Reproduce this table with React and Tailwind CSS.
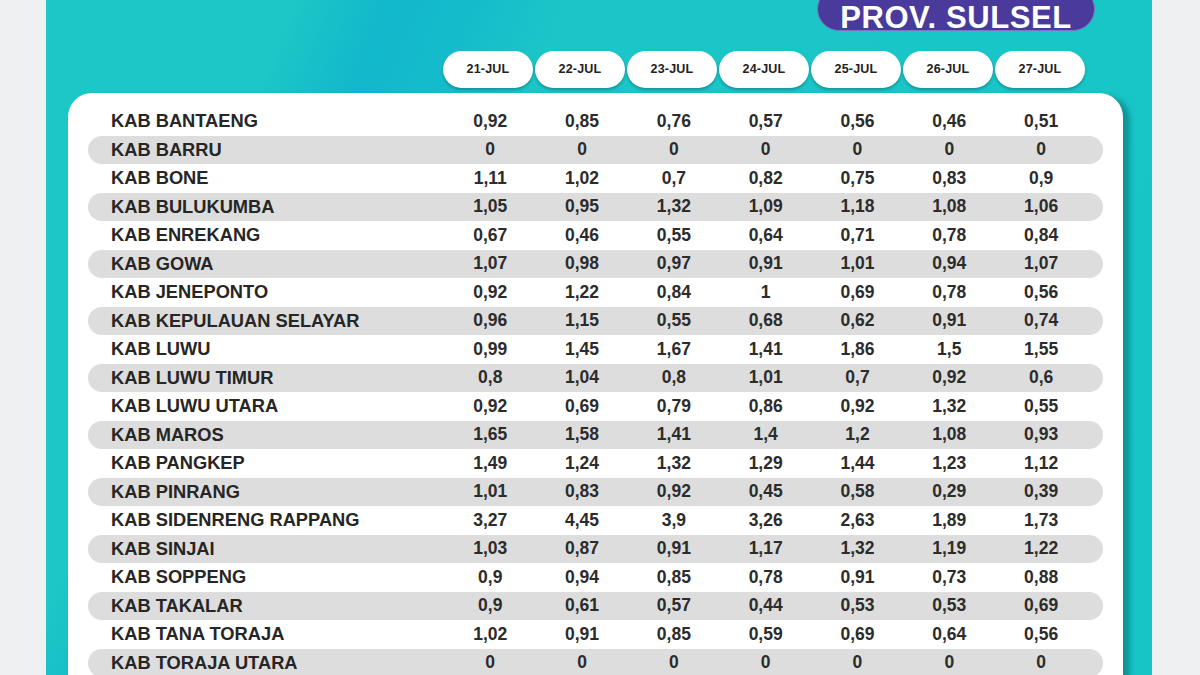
import React from 'react';

const dates = ['21-JUL', '22-JUL', '23-JUL', '24-JUL', '25-JUL', '26-JUL', '27-JUL'];

const rows = [
  ['KAB BANTAENG', '0,92', '0,85', '0,76', '0,57', '0,56', '0,46', '0,51'],
  ['KAB BARRU', '0', '0', '0', '0', '0', '0', '0'],
  ['KAB BONE', '1,11', '1,02', '0,7', '0,82', '0,75', '0,83', '0,9'],
  ['KAB BULUKUMBA', '1,05', '0,95', '1,32', '1,09', '1,18', '1,08', '1,06'],
  ['KAB ENREKANG', '0,67', '0,46', '0,55', '0,64', '0,71', '0,78', '0,84'],
  ['KAB GOWA', '1,07', '0,98', '0,97', '0,91', '1,01', '0,94', '1,07'],
  ['KAB JENEPONTO', '0,92', '1,22', '0,84', '1', '0,69', '0,78', '0,56'],
  ['KAB KEPULAUAN SELAYAR', '0,96', '1,15', '0,55', '0,68', '0,62', '0,91', '0,74'],
  ['KAB LUWU', '0,99', '1,45', '1,67', '1,41', '1,86', '1,5', '1,55'],
  ['KAB LUWU TIMUR', '0,8', '1,04', '0,8', '1,01', '0,7', '0,92', '0,6'],
  ['KAB LUWU UTARA', '0,92', '0,69', '0,79', '0,86', '0,92', '1,32', '0,55'],
  ['KAB MAROS', '1,65', '1,58', '1,41', '1,4', '1,2', '1,08', '0,93'],
  ['KAB PANGKEP', '1,49', '1,24', '1,32', '1,29', '1,44', '1,23', '1,12'],
  ['KAB PINRANG', '1,01', '0,83', '0,92', '0,45', '0,58', '0,29', '0,39'],
  ['KAB SIDENRENG RAPPANG', '3,27', '4,45', '3,9', '3,26', '2,63', '1,89', '1,73'],
  ['KAB SINJAI', '1,03', '0,87', '0,91', '1,17', '1,32', '1,19', '1,22'],
  ['KAB SOPPENG', '0,9', '0,94', '0,85', '0,78', '0,91', '0,73', '0,88'],
  ['KAB TAKALAR', '0,9', '0,61', '0,57', '0,44', '0,53', '0,53', '0,69'],
  ['KAB TANA TORAJA', '1,02', '0,91', '0,85', '0,59', '0,69', '0,64', '0,56'],
  ['KAB TORAJA UTARA', '0', '0', '0', '0', '0', '0', '0'],
];

export default function App() {
  return (
    <div className="w-full h-[675px] overflow-hidden bg-[#eef0f2] flex font-['Liberation_Sans',Arial,sans-serif]">
      <div className="ml-[46px] w-[1106px] h-full flex flex-col bg-[linear-gradient(112deg,#1bc7c7_0%,#1bc7c7_18%,#12b8cb_25%,#14bccb_31%,#1bc6c8_38%,#17c5c6_100%)]">
        {/* badge */}
        <div className="ml-[771px] mt-[-13px] h-[44px] w-[278px] rounded-[22px] bg-[#4a3a9b] border border-[#7f74c4] flex items-center justify-center pt-[17px]">
          <span className="text-white font-bold text-[31px] leading-[27px] tracking-[0.6px]">PROV. SULSEL</span>
        </div>

        {/* date pills */}
        <div className="ml-[397px] mt-[20px] flex gap-[2px]">
          {dates.map((d) => (
            <div
              key={d}
              className="w-[90px] h-[37px] rounded-full bg-white shadow-[0_2px_3px_rgba(0,60,60,0.35)] flex items-center justify-center text-[12.5px] font-bold text-[#222] tracking-[0.2px]"
            >
              {d}
            </div>
          ))}
        </div>

        {/* table card */}
        <div className="ml-[22px] mt-[5px] w-[1055px] flex-1 bg-white rounded-t-[24px] shadow-[7px_3px_5px_rgba(0,90,95,0.45)] pt-[14px] px-[20px]">
          {rows.map((r, i) => (
            <div
              key={r[0]}
              className={
                'h-[28.5px] flex items-center rounded-full pl-[23px] pr-[16px] text-[#262626] ' +
                (i % 2 === 1 ? 'bg-[#dddddd]' : '')
              }
            >
              <div className="w-[334px] text-[18.3px] font-bold leading-none">{r[0]}</div>
              {r.slice(1).map((v, j) => (
                <div key={j} className="w-[92px] text-center text-[17.5px] font-bold leading-none text-[#2c2c2c]">
                  {v}
                </div>
              ))}
            </div>
          ))}
        </div>
      </div>
    </div>
  );
}
